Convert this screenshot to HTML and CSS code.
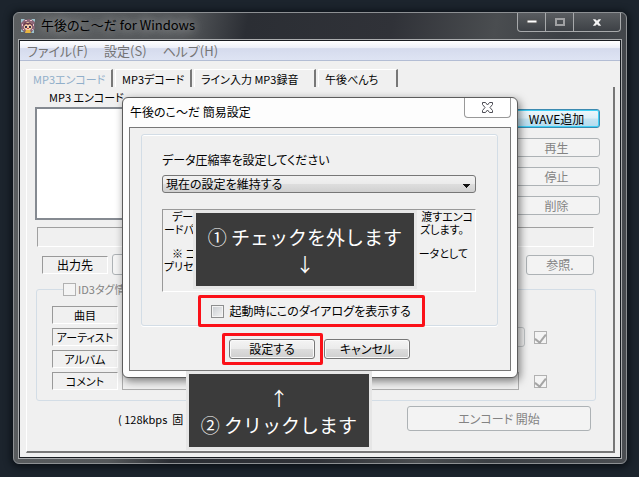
FILE: index.html
```html
<!DOCTYPE html>
<html lang="ja">
<head>
<meta charset="utf-8">
<title>午後のこ～だ for Windows</title>
<link rel="stylesheet" href="styles.css">
</head>
<body>
<main class="desktop">
  <section class="window">
    <header class="titlebar">
      <svg class="app-icon" viewBox="0 0 16 16" aria-hidden="true">
        <path d="M1 4 4 1l2 1 3-1 3 1 3 2-1 3 1 3-2 3-3 1H5L2 12 1 8z" fill="#8d6678"/>
        <path d="M1 1h4L1 5zM11 1h4v3zM1 11l3 3H1zM14 11v4h-3z" fill="#9fc4cf"/>
        <path d="M4 6 6 4h4l2 2v4l-2 2H6L4 10z" fill="#f3cba4"/>
        <path d="M3 7 5 4l3 1 2-1 3 3-1 1-2-2-2 1-2-1-2 2z" fill="#6d3c4f"/>
        <path d="M5 8h2v2H5zM9 8h2v2H9z" fill="#3b2c4c"/>
        <path d="M6 12h4l1 3H5z" fill="#e7b43f"/>
        <path d="M7 10h2v1H7z" fill="#c3484a"/>
        <path d="M5 2h2v1H5zM10 2h2v1h-2zM2 6h1v2H2zM13 6h1v2h-1zM3 11h1v1H3zM12 11h1v1h-1z" fill="#e8bccb"/>
      </svg>
      <h1 class="window-title">午後のこ～だ for Windows</h1>
      <div class="caption">
        <button class="caption-btn" type="button" aria-label="最小化"><svg width="12" height="6" viewBox="0 0 12 6"><path d="M1 1h10v3H1z" fill="#fff" stroke="#555" stroke-width="1"/></svg></button>
        <button class="caption-btn" type="button" aria-label="最大化" disabled><svg width="12" height="10" viewBox="0 0 12 10"><path d="M2 2h8v6H2z" fill="none" stroke="#a0a1a3" stroke-width="2"/></svg></button>
        <button class="caption-btn caption-close" type="button" aria-label="閉じる"><svg width="10" height="9" viewBox="0 0 12 10"><path d="M1 1h3l2 2 2-2h3L8 5l3 4H8L6 7 4 9H1l3-4z" fill="#f4f4f4"/></svg></button>
      </div>
    </header>
    <div class="client">
      <nav class="menubar">
        <button type="button">ファイル(F)</button>
        <button type="button">設定(S)</button>
        <button type="button">ヘルプ(H)</button>
      </nav>
      <div class="tabs" role="tablist">
        <button class="tab active" role="tab" type="button" aria-selected="true">MP3エンコード</button>
        <button class="tab" role="tab" type="button">MP3デコード</button>
        <button class="tab" role="tab" type="button">ライン入力 MP3録音</button>
        <button class="tab" role="tab" type="button">午後べんち</button>
      </div>
      <div class="panel">
        <h2 class="list-title">MP3 エンコード</h2>
        <div class="files">
          <div class="file-list"></div>
          <div class="file-actions">
            <button class="btn primary" type="button">WAVE追加</button>
            <button class="btn" type="button" disabled>再生</button>
            <button class="btn" type="button" disabled>停止</button>
            <button class="btn" type="button" disabled>削除</button>
          </div>
        </div>
        <div class="status-field"></div>
        <div class="output">
          <label class="sunken" for="out">出力先</label>
          <input class="output-path" id="out" type="text" disabled>
          <button class="btn browse" type="button" disabled>参照.</button>
        </div>
        <fieldset class="group tags">
          <legend><label class="check-label muted"><input class="check" type="checkbox" disabled>ID3タグ情</label></legend>
          <div class="tag-row"><label class="sunken" for="song">曲目</label><input class="short" id="song" type="text" disabled></div>
          <div class="tag-row">
            <label class="sunken" for="artist">アーティスト</label>
            <select class="combo artist" id="artist" disabled></select>
            <input class="check" type="checkbox" aria-labelledby="artist" checked disabled>
          </div>
          <div class="tag-row"><label class="sunken" for="album">アルバム</label><input class="short" id="album" type="text" disabled></div>
          <div class="tag-row">
            <label class="sunken" for="comment">コメント</label>
            <input class="field" id="comment" type="text" disabled>
            <input class="check" type="checkbox" aria-labelledby="comment" checked disabled>
          </div>
        </fieldset>
        <footer class="encode">
          <span class="bitrate">( 128kbps&nbsp; 固</span>
          <button class="btn start" type="button" disabled>エンコード 開始</button>
        </footer>
      </div>
    </div>
  </section>

  <section class="dialog" role="dialog" aria-labelledby="dialog-title">
    <header class="dialog-head">
      <h2 class="dialog-title" id="dialog-title">午後のこ～だ 簡易設定</h2>
      <button class="dialog-close" type="button" aria-label="閉じる"><svg width="13" height="11" viewBox="0 0 13 11"><path d="M1.500.5h3l2 2.500 2-2.500h3v2l-2.500 3 2.500 3v2h-3l-2-2.500-2 2.500h-3v-2l2.500-3-2.500-3z" fill="#fff" stroke="#4d4d55"/></svg></button>
    </header>
    <div class="dialog-body">
      <div class="group settings">
        <label class="prompt" for="rate">データ圧縮率を設定してください</label>
        <select class="combo rate" id="rate"><option>現在の設定を維持する</option></select>
        <div class="info">
          <p class="info-row"><span class="indent">デー</span><span>渡すエンコ</span></p>
          <p class="info-row"><span>ードパ</span><span class="inset">ズします。</span></p>
          <p class="info-row note"><span class="indent">※ コ</span><span>ータとして</span></p>
          <p class="info-row"><span>プリセ</span></p>
        </div>
        <label class="check-label startup"><input class="check" type="checkbox">起動時にこのダイアログを表示する</label>
      </div>
      <div class="dialog-actions">
        <div class="marked"><button class="btn" type="button">設定する</button></div>
        <button class="btn" type="button">キャンセル</button>
      </div>
    </div>
  </section>

  <aside class="callout step-one"><p>① チェックを外します</p><p>↓</p></aside>
  <aside class="callout step-two"><p>↑</p><p>② クリックします</p></aside>
</main>
</body>
</html>
```
FILE: styles.css
```css
* { box-sizing: border-box; }

body {
  margin: 0;
  font: 12px/16px "Noto Sans CJK JP", sans-serif;
  font-feature-settings: "palt";
  color: #000;
}

h1, h2, p { margin: 0; font-weight: 400; }

button, input, select {
  margin: 0;
  padding: 0;
  font: inherit;
  font-feature-settings: inherit;
  color: inherit;
}

/* Desktop and main window */
.desktop {
  position: relative;
  display: flex;
  min-height: 100vh;
  padding: 12px 12px 13px 13px;
  background: #1c242d;
}

.window {
  flex: 1;
  display: flex;
  flex-direction: column;
  padding: 0 5px 5px;
  border: 1px solid #8d9093;
  border-radius: 6px;
  background: linear-gradient(100deg, #5b5e60 0, #55585b 25%, #2b2e34 34%, #303238 55%, #4a4d50 70%, #3c4045 80%, #4b4e52 100%);
  box-shadow: 0 1px 7px 2px #0b1016;
}

.titlebar {
  display: flex;
  align-items: flex-start;
  height: 27px;
}

.app-icon { width: 16px; height: 16px; margin: 5px 5px 0 1px; }

.window-title { font-size: 13px; line-height: 18px; }

.titlebar .window-title {
  padding: 3px 8px 0 0;
  text-shadow: 0 0 8px #a0a2a3, 0 0 12px #8d9092;
}

.caption {
  display: flex;
  height: 19px;
  margin-left: auto;
  border: 1px solid #a7a9ab;
  border-top: 0;
  border-radius: 0 0 4px 4px;
  background: linear-gradient(#5a5d61, #3d4146);
}

.caption-btn {
  display: grid;
  place-items: center;
  width: 28px;
  border: 0;
  border-right: 1px solid #a7a9ab;
  background: none;
}

.caption-close { width: 46px; border-right: 0; }

.client {
  flex: 1;
  display: flex;
  flex-direction: column;
  border: 1px solid #171b20;
  outline: 1px solid #aaacae;
  background: #f0f0f0;
}

.menubar {
  display: flex;
  gap: 16px;
  height: 20px;
  padding-left: 7px;
  border-bottom: 1px solid #b3bdd4;
  background: linear-gradient(#fff 0, #edf0f8 35%, #d5dbed 40%, #dee4f3 100%);
  font-size: 13px;
  color: #747474;
}

.menubar button { border: 0; background: none; line-height: 18px; }

.tabs {
  display: grid;
  grid-template-columns: 87px 77px 122px 80px;
  gap: 2px;
  height: 18px;
  margin: 8px 6px 0;
}

.tab {
  padding: 1px 0 0 6px;
  border: 0;
  border-top: 1px solid #fff;
  border-left: 1px solid #fff;
  border-right: 2px solid #777;
  background: #f0f0f0;
  font-size: 11px;
  text-align: left;
  white-space: nowrap;
}

.tab.active { color: #91afca; }

.panel {
  flex: 1;
  margin: 0 5px 4px 6px;
  padding: 3px 13px 0 8px;
  border-left: 1px solid #fff;
  border-right: 2px solid #777;
  border-bottom: 2px solid #777;
}

.list-title { height: 17px; padding-left: 14px; font-size: 11px; line-height: 14px; }

.files {
  display: grid;
  grid-template-columns: 1fr 87px;
  gap: 8px;
  height: 113px;
}

.file-list { border: 2px solid #858a91; background: #fff; }

.file-actions {
  display: grid;
  grid-auto-rows: 19px;
  align-content: start;
  gap: 10px;
  padding-top: 2px;
}

/* Buttons */
.btn {
  border: 1px solid #777;
  border-radius: 3px;
  background: linear-gradient(#f4f4f4 0, #ebebeb 48%, #dcdcdc 52%, #cfcfcf 100%);
  box-shadow: inset 0 0 0 1px #fafafa;
  line-height: 16px;
  white-space: nowrap;
}

.btn:disabled {
  border-color: #adb2b5;
  background: #f3f3f3;
  box-shadow: none;
  color: #838383;
}

.btn.primary {
  border-color: #3c8ab0;
  background: linear-gradient(#eef7fb 0, #ddeff8 48%, #c5e4f2 52%, #b3dbee 100%);
  box-shadow: inset 0 0 0 1px #3fd0f6;
}

/* Encode form */
.status-field {
  height: 20px;
  margin: 7px 6px 0 2px;
  border: 1px solid #a0a0a0;
  border-right-color: #fff;
  border-bottom-color: #fff;
}

.output {
  display: flex;
  align-items: center;
  height: 21px;
  margin: 7px 6px 0 7px;
}

.sunken {
  height: 18px;
  border: 1px solid #999;
  border-right-color: #fff;
  border-bottom-color: #fff;
  font-size: 11px;
  line-height: 16px;
  text-align: center;
  white-space: nowrap;
}

.output .sunken { width: 66px; font-size: 12px; }

.output-path {
  flex: 1;
  min-width: 0;
  height: 21px;
  margin: 0 16px 0 4px;
  border: 1px solid #adb2b5;
  border-radius: 3px;
  background: #f4f4f4;
}

.browse { width: 68px; height: 20px; }

.group { border: 1px solid #d3dde6; border-radius: 3px; }

.tags {
  min-width: 0;
  height: 119px;
  margin: 7px 4px 0 1px;
  padding: 8px 8px 0 15px;
}

.tags legend { margin-left: 11px; padding: 0; }

.check-label { display: flex; align-items: center; gap: 2px; }

.muted { height: 14px; font-size: 11px; color: #838383; }

.check {
  display: grid;
  place-items: center;
  flex: none;
  width: 13px;
  height: 13px;
  appearance: none;
  border: 1px solid #8e8f8f;
  background: linear-gradient(135deg, #c8ccd0, #f4f4f4);
  box-shadow: inset 0 0 0 1px #f4f4f4;
}

.check:disabled { border-color: #b1b1b1; background: #f4f4f4; }

.check:checked::before {
  content: "";
  width: 5px;
  height: 9px;
  margin-bottom: 2px;
  border: solid #a5a5a5;
  border-width: 0 2px 2px 0;
  transform: rotate(38deg);
}

.tag-row {
  display: grid;
  grid-template-columns: 66px 1fr 64px;
  column-gap: 4px;
  align-items: center;
  height: 22px;
}

.tag-row .check { margin-left: 11px; }

.field, .short {
  width: 100%;
  height: 18px;
  border: 1px solid #adadad;
  background: #f0f0f0;
}

.short { width: 90%; }

.combo {
  appearance: none;
  border: 1px solid #777;
  border-radius: 3px;
  background:
    conic-gradient(from -45deg at 50% 100%, #111 90deg, transparent 0) right 5px center / 7px 4px no-repeat,
    linear-gradient(#f2f2f2 0, #ebebeb 48%, #dddddd 52%, #d0d0d0 100%);
}

.rate {
  background:
    linear-gradient(#111, #111) right 7px top 10px / 3px 1px no-repeat,
    linear-gradient(#111, #111) right 6px top 9px / 5px 1px no-repeat,
    linear-gradient(#111, #111) right 5px top 8px / 7px 1px no-repeat,
    linear-gradient(#111, #111) right 8px top 11px / 1px 1px no-repeat,
    linear-gradient(#f2f2f2 0, #ebebeb 48%, #dddddd 52%, #d0d0d0 100%);
}

.rate, .artist { height: 20px; }

.artist { border-color: #adb2b5; margin-right: -6px; background: #f0f0f0; }

.encode {
  display: flex;
  align-items: center;
  justify-content: space-between;
  margin: 5px 9px 0 83px;
  font-size: 11px;
}

.start { width: 184px; height: 25px; font-size: 12px; }

/* Settings dialog */
.dialog {
  position: absolute;
  left: 122px;
  top: 97px;
  width: 396px;
  padding: 0 6px 6px;
  border: 1px solid #5c5c5c;
  border-radius: 6px;
  background: #fdfdfd;
  box-shadow: 2px 3px 8px rgba(0, 0, 0, .5);
}

.dialog-head { display: flex; justify-content: space-between; height: 29px; }

.dialog-title { padding: 5px 0 0 1px; font-size: 12px; line-height: 18px; }

.dialog-close {
  display: grid;
  place-items: center;
  width: 47px;
  height: 20px;
  border: 1px solid #999;
  border-top: 0;
  border-radius: 0 0 4px 4px;
  background: #fff;
}

.dialog-body {
  height: 244px;
  padding: 6px 12px 0 11px;
  border: 1px solid #777;
  background: #f0f0f0;
}

.settings {
  display: flex;
  flex-direction: column;
  height: 192px;
  padding: 17px 21px 0 20px;
  box-shadow: inset 0 1px #fff, 0 1px #fff;
}

.rate { margin-top: 7px; padding-left: 3px; line-height: 16px; }

.info {
  flex: none;
  height: 83px;
  margin-top: 16px;
  border: 1px solid #999;
  border-right-color: #fff;
  border-bottom-color: #fff;
  font-size: 11px;
  line-height: 13px;
}

.info-row { display: flex; justify-content: space-between; padding: 0 2px 0 1px; }

.note { padding-top: 11px; padding-right: 7px; }

.indent { padding-left: 8px; }

.inset { padding-right: 9px; }

/* Red frames mark the controls named by the callouts */
.startup, .marked { border: 3px solid #fb1018; border-radius: 2px; }

.startup {
  align-self: center;
  flex: none;
  gap: 6px;
  width: 227px;
  height: 32px;
  margin-top: 3px;
  margin-left: -16px;
  padding-left: 10px;
  white-space: nowrap;
}

.dialog-actions {
  display: flex;
  justify-content: center;
  align-items: center;
  gap: 1px;
  height: 32px;
  margin: 7px 7px 0 0;
}

.dialog-actions .btn { width: 86px; height: 20px; }

.marked { height: 32px; padding: 3px 5px 0 4px; }

.marked .btn { display: block; }

/* Step callouts */
.callout {
  position: absolute;
  padding: 10px 9px 9px;
  border: 3px solid #e6e6e6;
  background: #3b3b3b;
  font-size: 19px;
  line-height: 27px;
  font-feature-settings: normal;
  text-align: center;
  color: #fff;
  white-space: nowrap;
}

.step-one { left: 193px; top: 210px; width: 224px; }

.step-two { left: 186px; top: 371px; width: 186px; }
```
